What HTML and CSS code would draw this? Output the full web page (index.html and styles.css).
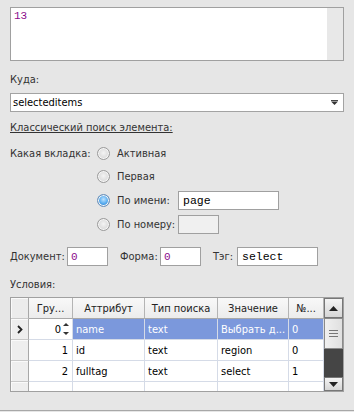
FILE: index.html
```html
<!DOCTYPE html>
<html>
<head>
<meta charset="utf-8">
<link rel="stylesheet" href="styles.css">
</head>
<body>
<div class="win">
  <div class="memo">
    <div class="memo-text">13</div>
    <div class="memo-scroll"></div>
  </div>
  <div class="lbl kuda">Куда:</div>
  <div class="combo">
    <span class="combo-text">selecteditems</span>
    <svg class="combo-arrow" width="7" height="5" viewBox="0 0 7 5"><rect x="0" y="0" width="7" height="1" fill="#444"/><path d="M0 1.5 H7 L3.5 5 Z" fill="#333"/></svg>
  </div>
  <div class="link">Классический поиск элемента:</div>
  <div class="tabs">
    <div class="tabs-label">Какая вкладка:</div>
    <div class="tabs-opts">
      <div class="opt r1"><span class="radio"></span><span>Активная</span></div>
      <div class="opt r2"><span class="radio"></span><span>Первая</span></div>
      <div class="opt r3"><span class="radio checked"></span><span class="opt-name">По имени:</span><div class="field mono wide">page</div></div>
      <div class="opt r4"><span class="radio"></span><span class="opt-name">По номеру:</span><div class="field disabled short"></div></div>
    </div>
  </div>
  <div class="docrow">
    <span class="dl dl-doc">Документ:</span>
    <div class="field mono purple w40">0</div>
    <span class="dl dl-form">Форма:</span>
    <div class="field mono purple w40">0</div>
    <span class="dl dl-tag">Тэг:</span>
    <div class="field mono w80">select</div>
  </div>
  <div class="lbl cond">Условия:</div>
  <div class="grid">
    <div class="table">
      <div class="row head">
        <div class="c rh corner"></div>
        <div class="c">Гру...</div>
        <div class="c">Аттрибут</div>
        <div class="c">Тип поиска</div>
        <div class="c">Значение</div>
        <div class="c">№...</div>
      </div>
      <div class="row sel">
        <div class="c rh"><svg width="6" height="9" viewBox="0 0 6 9"><path d="M1 1 L4.5 4.5 L1 8" fill="none" stroke="#222" stroke-width="1.8"/></svg></div>
        <div class="c num edit"><span>0</span><svg class="spin" width="6" height="14" viewBox="0 0 6 14"><path d="M0 4 L3 1 L6 4 Z" fill="#333"/><path d="M0 10 L3 13 L6 10 Z" fill="#333"/></svg></div>
        <div class="c hl">name</div>
        <div class="c hl">text</div>
        <div class="c hl">Выбрать д...</div>
        <div class="c hl">0</div>
      </div>
      <div class="row">
        <div class="c rh"></div>
        <div class="c num">1</div>
        <div class="c">id</div>
        <div class="c">text</div>
        <div class="c">region</div>
        <div class="c">0</div>
      </div>
      <div class="row">
        <div class="c rh"></div>
        <div class="c num">2</div>
        <div class="c">fulltag</div>
        <div class="c">text</div>
        <div class="c">select</div>
        <div class="c">1</div>
      </div>
      <div class="row">
        <div class="c rh"></div>
        <div class="c"></div>
        <div class="c"></div>
        <div class="c"></div>
        <div class="c"></div>
        <div class="c"></div>
      </div>
    </div>
    <div class="vscroll">
      <div class="sbtn up"><svg width="9" height="5" viewBox="0 0 9 5"><path d="M0 5 L4.5 0 L9 5 Z" fill="#222"/></svg></div>
      <div class="thumb"><svg width="9" height="7" viewBox="0 0 9 7"><rect y="0" width="9" height="1" fill="#777"/><rect y="3" width="9" height="1" fill="#777"/><rect y="6" width="9" height="1" fill="#777"/></svg></div>
      <div class="track"></div>
      <div class="sbtn down"><svg width="9" height="5" viewBox="0 0 9 5"><path d="M0 0 L4.5 5 L9 0 Z" fill="#222"/></svg></div>
    </div>
  </div>
</div>
</body>
</html>
```

FILE: styles.css
```css
html, body {
  margin: 0;
  padding: 0;
  background: #e6e6e6;
}
body {
  font-family: "DejaVu Sans Condensed", "DejaVu Sans", sans-serif;
  font-size: 11px;
  color: #333;
}
.win {
  width: 354px;
  height: 411px;
  box-sizing: border-box;
  padding: 7px 10px 0 10px;
  border-bottom: 1px solid #a8a8a8;
  display: flex;
  flex-direction: column;
  white-space: nowrap;
}
.memo {
  height: 54px;
  box-sizing: border-box;
  border: 1px solid #a0a0a0;
  background: #fff;
  display: flex;
}
.memo-text {
  flex: 1;
  padding: 2px 3px;
  font-family: "Liberation Mono", monospace;
  font-size: 11px;
  line-height: 13px;
  color: #8b0a8b;
}
.memo-scroll {
  width: 16px;
  background: #e8e8e8;
}
.lbl {
  height: 14px;
  line-height: 14px;
}
.kuda { margin-top: 12px; }
.combo {
  margin-top: 6px;
  height: 19px;
  box-sizing: border-box;
  border: 1px solid #a3a3a3;
  background: #fff;
  display: flex;
  align-items: center;
  padding: 0 5px 0 2px;
  color: #000;
}
.combo-text { flex: 1; }
.combo-arrow { display: block; }
.link {
  margin-top: 9px;
  height: 14px;
  line-height: 14px;
  text-decoration: underline;
}
.tabs {
  margin-top: 7px;
  display: flex;
}
.tabs-label {
  width: 87px;
  height: 23px;
  line-height: 23px;
}
.tabs-opts {
  display: flex;
  flex-direction: column;
}
.opt {
  display: flex;
  align-items: center;
  gap: 7px;
}
.r1, .r2 { height: 23px; }
.r3, .r4 { height: 24px; }
.radio {
  width: 13px;
  height: 13px;
  flex: none;
  box-sizing: border-box;
  border-radius: 50%;
  border: 1px solid #9a9a9a;
  background: radial-gradient(circle at 50% 45%, #f4f4f4 0, #e2e2e2 45%, #cfcfcf 100%);
  box-shadow: inset 0 0 0 1px #f6f6f6;
}
.radio.checked {
  border-color: #6a8fb8;
  background: radial-gradient(circle at 50% 40%, #bfe3ff 0, #5fb0f0 45%, #2f86d6 75%, #dfeefa 78%, #e8f2fb 100%);
}
.opt-name {
  width: 54px;
  flex: none;
}
.field {
  height: 19px;
  flex: none;
  box-sizing: border-box;
  border: 1px solid #a0a0a0;
  background: #fff;
  color: #000;
  padding: 0 4px;
  display: flex;
  align-items: center;
}
.mono {
  font-family: "Liberation Mono", monospace;
  font-size: 11.5px;
}
.purple {
  color: #8b0a8b;
  font-size: 11px;
  padding-left: 3px;
}
.wide { width: 101px; }
.short { width: 41px; }
.disabled { background: #f0f0f0; }
.docrow {
  margin-top: 11px;
  display: flex;
  align-items: center;
  height: 19px;
}
.dl { flex: none; }
.dl-doc { width: 57px; }
.dl-form { width: 40px; margin-left: 12px; }
.dl-tag { width: 24px; margin-left: 12px; }
.w40 { width: 41px; }
.w80 { width: 81px; }
.cond { margin-top: 12px; }
.grid {
  margin-top: 5px;
  height: 95px;
  box-sizing: border-box;
  border: 1px solid #a0a0a0;
  display: flex;
  overflow: hidden;
  background: #fff;
}
.table {
  width: 313px;
  overflow: hidden;
  color: #000;
}
.row {
  display: grid;
  grid-template-columns: 18px 44px 72px 73px 71px 35px;
  height: 21px;
}
.c {
  box-sizing: border-box;
  border-right: 1px solid #d5dbe7;
  border-bottom: 1px solid #d5dbe7;
  padding: 0 3px;
  display: flex;
  align-items: center;
  white-space: nowrap;
  overflow: hidden;
}
.head .c {
  background: linear-gradient(#f8f8f8, #ececec);
  border-right: 1px solid #b4b4b4;
  border-bottom: 1px solid #a8a8a8;
  justify-content: center;
  color: #222;
}
.c.rh {
  background: #eeeeee;
  border-right: 1px solid #a8a8a8;
  border-bottom: 1px solid #c8c8c8;
  box-shadow: inset 1px 1px 0 #fafafa;
  justify-content: center;
  padding: 0;
}
.head .c.corner {
  background: #ececec;
}
.num {
  justify-content: flex-end;
  padding-right: 4px;
}
.edit {
  padding-right: 3px;
  gap: 2px;
}
.spin { display: block; }
.hl {
  background: #7b98dc;
  color: #fff;
}
.vscroll {
  width: 19px;
  background: #454545;
  display: flex;
  flex-direction: column;
}
.sbtn {
  box-sizing: border-box;
  border: 1px solid #777;
  background: linear-gradient(#f4f4f4, #d6d6d6);
  display: flex;
  align-items: center;
  justify-content: center;
}
.up { height: 20px; }
.down { height: 14px; }
.thumb {
  height: 31px;
  box-sizing: border-box;
  border: 1px solid #8a8a8a;
  background: linear-gradient(90deg, #f0f0f0, #e0e0e0);
  display: flex;
  align-items: center;
  justify-content: center;
}
.track { flex: 1; }
```
